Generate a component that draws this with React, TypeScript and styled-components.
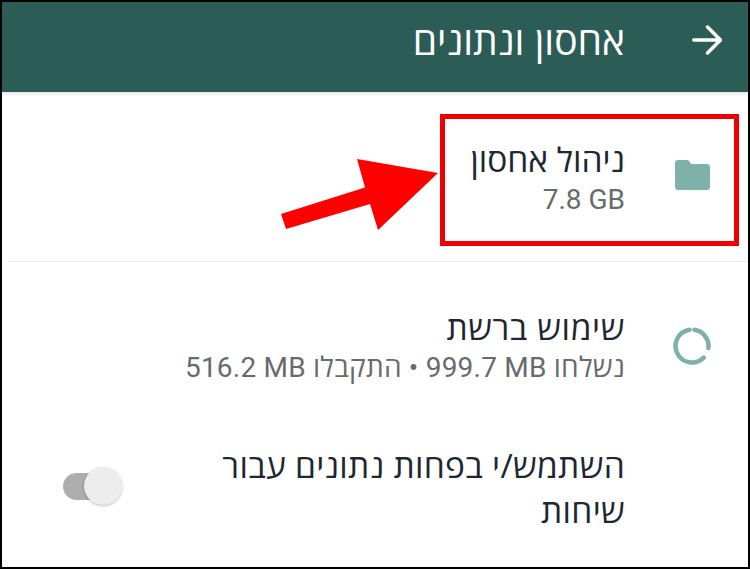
import * as React from 'react'
import styled, { createGlobalStyle } from 'styled-components'

const GlobalStyle = createGlobalStyle`
  html, body {
    margin: 0;
    padding: 0;
    background: #fff;
  }
`

const Frame = styled.div`
  position: relative;
  box-sizing: border-box;
  width: 750px;
  height: 569px;
  border: 2px solid #000;
  overflow: hidden;
  background: #fff;
  direction: rtl;
  font-family: 'Open Sans', 'Liberation Sans', sans-serif;
`

const Header = styled.header`
  display: flex;
  align-items: center;
  box-sizing: border-box;
  height: 90px;
  padding: 0 26px 15px 0;
  gap: 67px;
  background: #2b5c55;
  color: #fff;
  box-shadow: 0 1px 4px rgba(0, 0, 0, 0.15);
`

const Title = styled.h1`
  margin: 0;
  font-size: 39px;
  font-weight: 400;
  line-height: 50px;
`

const Row = styled.div<{ $height: number; $divider?: boolean }>`
  display: flex;
  align-items: flex-start;
  height: ${p => p.$height}px;
  margin-left: 6px;
  border-bottom: ${p => (p.$divider ? '1px solid #e6e6e6' : 'none')};
`

const IconCell = styled.div<{ $top: number }>`
  flex: 0 0 123px;
  display: flex;
  justify-content: center;
  box-sizing: border-box;
  padding-top: ${p => p.$top}px;
  padding-left: 11px;
`

const TextCell = styled.div<{ $top: number }>`
  flex: 1;
  padding-top: ${p => p.$top}px;
`

const Primary = styled.div<{ $tracking?: number }>`
  font-size: 33.5px;
  line-height: 44px;
  letter-spacing: ${p => p.$tracking ?? 0}px;
  color: #1d2731;
`

const Secondary = styled.div<{ $tracking?: number }>`
  font-family: 'Roboto', 'Open Sans', 'Liberation Sans', sans-serif;
  font-size: 28px;
  line-height: 38px;
  letter-spacing: ${p => p.$tracking ?? 0}px;
  color: #666b6e;
`

const Amount = styled.bdi`
  direction: ltr;
  unicode-bidi: isolate;
`

const SwitchRow = styled.div`
  display: flex;
  align-items: flex-start;
  justify-content: space-between;
  padding-right: 123px;
`

const SwitchText = styled.div`
  width: 440px;
  padding-top: 11px;
  font-size: 33.5px;
  line-height: 45px;
  letter-spacing: 0.3px;
  color: #1d2731;
`

const Switch = styled.div`
  position: relative;
  width: 60px;
  height: 27px;
  margin: 41px 0 0 61px;
  direction: ltr;
`

const Track = styled.div`
  width: 46px;
  height: 27px;
  border-radius: 14px;
  background: #adadad;
`

const Thumb = styled.div`
  position: absolute;
  left: 21px;
  top: -6px;
  width: 38px;
  height: 38px;
  border-radius: 50%;
  background: #ececec;
  box-shadow: 0 1px 3px rgba(0, 0, 0, 0.25);
`

const Highlight = styled.div`
  position: absolute;
  left: 438px;
  top: 112px;
  width: 299px;
  height: 132px;
  box-sizing: border-box;
  border: 5px solid #ee0000;
`

const ArrowMark = styled.svg`
  position: absolute;
  left: 278px;
  top: 156px;
`

const App = () => (
  <>
    <GlobalStyle />
    <Frame>
      <Header>
        <svg width="30" height="30" viewBox="0 0 30 30" fill="none" stroke="#fff" strokeWidth="3.500" strokeLinecap="round" strokeLinejoin="round">
          <path d="M1.750 15h26.500M15.500 2l13 13-13 13" />
        </svg>
        <Title>אחסון ונתונים</Title>
      </Header>
      <Row $height={169} $divider>
        <IconCell $top={68}>
          <svg width="35" height="30" viewBox="0 0 35 30">
            <path d="M3 0h9c1 0 2 .5 2.500 1.500L16 4h16c1.700 0 3 1.300 3 3v20c0 1.700-1.300 3-3 3H3c-1.700 0-3-1.300-3-3V3c0-1.700 1.300-3 3-3z" fill="#7eb1a9" />
          </svg>
        </IconCell>
        <TextCell $top={45}>
          <Primary>ניהול אחסון</Primary>
          <Secondary><Amount>7.8 GB</Amount></Secondary>
        </TextCell>
      </Row>
      <Row $height={170}>
        <IconCell $top={65}>
          <svg width="38" height="38" viewBox="0 0 38 38" fill="none" stroke="#7eb1a9" strokeWidth="4.500" strokeLinecap="round">
            <path d="M21.500 2.700A16.500 16.500 0 0 1 35.400 21" />
            <path d="M16.500 2.700A16.500 16.500 0 1 0 30.700 30.700" />
          </svg>
        </IconCell>
        <TextCell $top={43}>
          <Primary $tracking={0.6}>שימוש ברשת</Primary>
          <Secondary $tracking={0.22}>נשלחו <Amount>999.7 MB</Amount> • התקבלו <Amount>516.2 MB</Amount></Secondary>
        </TextCell>
      </Row>
      <SwitchRow>
        <SwitchText>השתמש/י בפחות נתונים עבור שיחות</SwitchText>
        <Switch>
          <Track />
          <Thumb />
        </Switch>
      </SwitchRow>
      <Highlight />
      <ArrowMark width="160" height="75" viewBox="0 0 160 75">
        <path d="M158 15L77 1 85 29.500 1 56 6 71 90 46 98 72z" fill="#ff0000" />
      </ArrowMark>
    </Frame>
  </>
)

export default App
